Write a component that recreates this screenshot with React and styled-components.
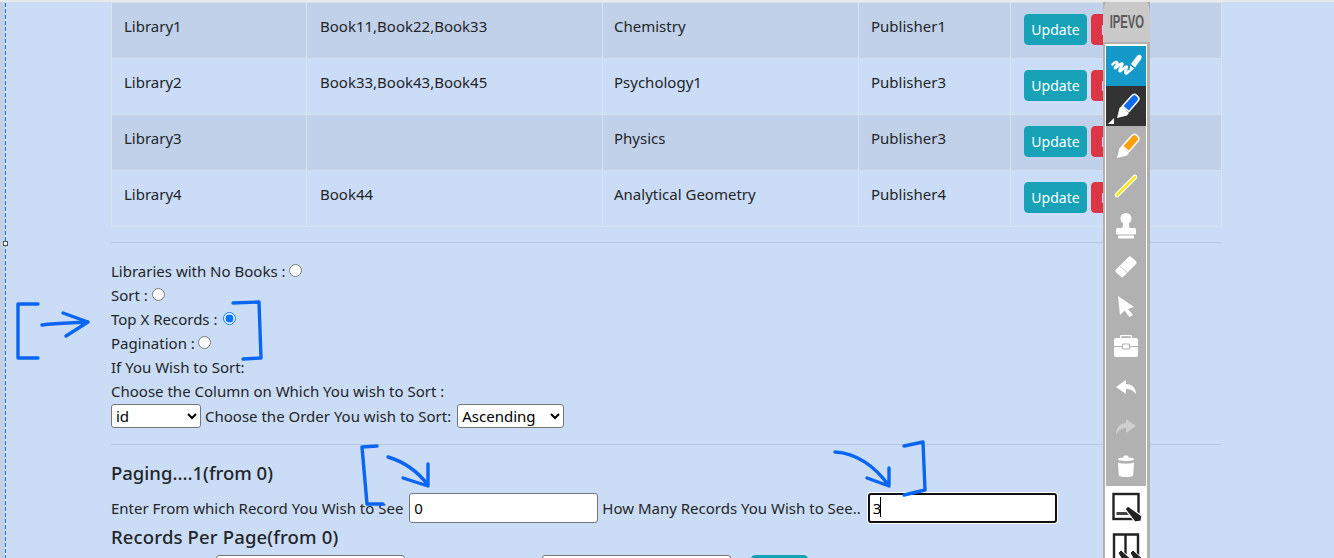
import React from "react";
import styled, { createGlobalStyle } from "styled-components";

const GlobalStyle = createGlobalStyle`
  html, body {
    margin: 0;
    padding: 0;
    height: 558px;
    overflow: hidden;
    background: #cbddf6;
  }
  * { box-sizing: border-box; }
`;

const Page = styled.div`
  position: relative;
  width: 1334px;
  height: 558px;
  overflow: hidden;
  display: flex;
  background: #cbddf6;
  border-top: 2px solid #e9e9e9;
  font-family: "Noto Sans", "Open Sans", sans-serif;
  font-size: 15px;
  line-height: 24px;
  color: #212529;
`;

const Rail = styled.div`
  width: 5px;
  flex: none;
  background: #c3d0e4;
`;

const DashLine = styled.div`
  width: 1px;
  flex: none;
  margin-top: 1px;
  background: repeating-linear-gradient(to bottom, #1f74d8 0 4px, #ffffff 4px 6px);
`;

const Handle = styled.div`
  position: absolute;
  left: 3px;
  top: 239px;
  width: 5px;
  height: 5px;
  background: #fff;
  border: 1px solid #555;
`;

const Container = styled.main`
  width: 1110px;
  flex: none;
  margin-left: 105px;
`;

const Table = styled.table`
  width: 1110px;
  table-layout: fixed;
  border-collapse: collapse;
`;

const Row = styled.tr`
  height: 56px;
  background: ${(p) => (p.$striped ? "#c1d1ea" : "transparent")};
`;

const Cell = styled.td`
  border: 1px solid #d8e1ee;
  padding: 11px 0 0 ${(p) => p.$pad || 13}px;
  vertical-align: top;
  overflow: hidden;
  white-space: nowrap;
  width: ${(p) => p.$w}px;
`;

const Btn = styled.button`
  display: inline-block;
  height: 31px;
  padding: 0 0 0 ${(p) => p.$pl || 0}px;
  border: 1px solid ${(p) => p.$color};
  border-radius: 4px;
  background: ${(p) => p.$color};
  color: #fff;
  font: inherit;
  font-size: 14px;
  line-height: 29px;
  text-align: ${(p) => (p.$pl ? "left" : "center")};
  width: ${(p) => p.$w}px;
  margin-right: 4px;
  vertical-align: top;
`;

const Rule = styled.hr`
  margin: ${(p) => p.$top || 16}px 0 16px;
  height: 1px;
  border: 0;
  background: #b4c6e2;
`;

const Line = styled.div`
  height: 24px;
  display: flex;
  align-items: center;
  white-space: nowrap;
`;

const Radio = styled.input.attrs({ type: "radio" })`
  margin: 0 0 2px ${(p) => p.$gap || 4}px;
  width: 13px;
  height: 13px;
`;

const SelectRow = styled.div`
  display: flex;
  align-items: center;
  gap: 4px;
  height: 25px;
  white-space: nowrap;
`;

const Select = styled.select`
  width: ${(p) => p.$w}px;
  height: 24px;
  margin-left: ${(p) => p.$ml || 0}px;
  background: #fff;
  color: #000;
  border: 1px solid #767676;
  border-radius: 3px;
  font-family: inherit;
  font-size: 15px;
  padding-left: 0;
`;

const Heading = styled.h5`
  margin: 0 0 ${(p) => p.$mb || 8}px;
  height: 24px;
  font-size: 18.5px;
  line-height: 24px;
  font-weight: 500;
  letter-spacing: ${(p) => p.$track || 0}px;
  white-space: nowrap;
`;

const FieldRow = styled.div`
  display: flex;
  align-items: center;
  gap: 4px;
  height: 30px;
  white-space: nowrap;
  margin-bottom: 2px;
`;

const FieldWrap = styled.div`
  position: relative;
  flex: none;
  margin-left: ${(p) => p.$ml || 0}px;
`;

const Field = styled.input`
  display: block;
  width: 189px;
  height: 30px;
  padding: 0 4px;
  background: #fff;
  color: #000;
  border: 1px solid #767676;
  border-radius: 3px;
  font-family: inherit;
  font-size: 15px;
  outline: none;
  ${(p) =>
    p.$focused &&
    `
    border: 2px solid #101010;
    padding: 0 3px;
    box-shadow: 0 0 0 1px #fff;
  `}
`;

const Caret = styled.span`
  position: absolute;
  left: 12px;
  top: 4px;
  width: 1px;
  height: 20px;
  background: #000;
`;

const Spacer = styled.span`
  width: ${(p) => p.$w}px;
  flex: none;
`;

const Toolbar = styled.aside`
  position: absolute;
  left: 1103px;
  top: -12px;
  width: 47px;
  height: 572px;
  display: flex;
  flex-direction: column;
  background: #b1b1b1;
  padding: 0 3px 0 2px;
`;

const ToolHead = styled.div`
  margin: 0 -3px 0 -2px;
  height: 52px;
  flex: none;
  padding-top: 22px;
  border-radius: 24px 24px 0 0 / 24px 24px 0 0;
  background: #c9c9c9;
  color: #5a5a5a;
  font-family: "Liberation Sans", sans-serif;
  font-size: 15px;
  font-weight: 700;
  line-height: 20px;
  text-align: center;
  span {
    display: inline-block;
    transform: scale(0.75, 1.2);
  }
`;

const ToolBody = styled.div`
  flex: 1;
  display: flex;
  flex-direction: column;
  margin-top: 2px;
  background: #b1b1b1;
  border: solid #fff;
  border-width: 2px 1px 0;
`;

const ToolCell = styled.div`
  width: 40px;
  height: 40px;
  flex: none;
  position: relative;
  background: ${(p) => p.$bg || "transparent"};
  svg {
    display: block;
    width: 40px;
    height: 40px;
  }
`;

const Corner = styled.span`
  position: absolute;
  left: 2px;
  bottom: 2px;
  width: 0;
  height: 0;
  border-style: solid;
  border-width: 0 0 6px 6px;
  border-color: transparent transparent #fff transparent;
`;

const WhiteTray = styled.div`
  flex: 1;
  background: #fff;
  display: flex;
  flex-direction: column;
`;

const Overlay = styled.svg`
  position: absolute;
  left: 0;
  top: -2px;
  width: 1334px;
  height: 558px;
  pointer-events: none;
`;

const Ink = styled.path`
  fill: none;
  stroke: #0a66f2;
  stroke-width: 3.4;
  stroke-linecap: round;
  stroke-linejoin: round;
`;

const rows = [
  ["Library1", "Book11,Book22,Book33", "Chemistry", "Publisher1"],
  ["Library2", "Book33,Book43,Book45", "Psychology1", "Publisher3"],
  ["Library3", "", "Physics", "Publisher3"],
  ["Library4", "Book44", "Analytical Geometry", "Publisher4"],
];

const Pen = ({ color }) => (
  <svg viewBox="0 0 40 40">
    <path d="M11 32l2.500-10 2.500-2 7 7-2 2.500z" fill="#fff" />
    <path d="M16.500 20l9.500-10.500a3.200 3.200 0 0 1 4.500-.2l1.300 1.200a3.200 3.200 0 0 1 .2 4.500L23 25.500z" fill={color} stroke="#fff" strokeWidth="1.500" />
  </svg>
);

function App() {
  return (
    <>
      <GlobalStyle />
      <Page>
        <Rail />
        <DashLine />
        <Handle />
        <Container>
          <Table>
            <tbody>
              {rows.map((r, i) => (
                <Row key={r[0]} $striped={i % 2 === 0}>
                  <Cell $w={195} $pad={12}>{r[0]}</Cell>
                  <Cell $w={296}>{r[1]}</Cell>
                  <Cell $w={256} $pad={11}>{r[2]}</Cell>
                  <Cell $w={152} $pad={12}>{r[3]}</Cell>
                  <Cell $w={211}>
                    <Btn $color="#17a2b8" $w={63}>Update</Btn>
                    <Btn $color="#dc3545" $w={58} $pl={9}>Delete</Btn>
                  </Cell>
                </Row>
              ))}
            </tbody>
          </Table>
          <Rule $top={15} />
          <Line>Libraries with No Books :<Radio name="a" $gap={3} /></Line>
          <Line>Sort :<Radio name="a" /></Line>
          <Line>Top X Records :<Radio name="a" $gap={6} defaultChecked /></Line>
          <Line>Pagination :<Radio name="a" $gap={3} /></Line>
          <Line>If You Wish to Sort:</Line>
          <Line>Choose the Column on Which You wish to Sort :</Line>
          <SelectRow>
            <Select $w={90} defaultValue="id"><option>id</option></Select>
            <span>Choose the Order You wish to Sort:</span>
            <Select $w={107} $ml={2} defaultValue="Ascending"><option>Ascending</option></Select>
          </SelectRow>
          <Rule />
          <Heading>Paging....1(from 0)</Heading>
          <FieldRow>
            <span>Enter From which Record You Wish to See</span>
            <FieldWrap $ml={2}><Field defaultValue="0" readOnly /></FieldWrap>
            <span>How Many Records You Wish to See..</span>
            <FieldWrap $ml={3}>
              <Field defaultValue="3" readOnly $focused />
              <Caret />
            </FieldWrap>
          </FieldRow>
          <Heading $mb={6} $track={0.15}>Records Per Page(from 0)</Heading>
          <FieldRow>
            <Spacer $w={101} />
            <Field readOnly />
            <Spacer $w={129} />
            <Field readOnly />
            <Spacer $w={12} />
            <Btn $color="#17a2b8" $w={57} />
          </FieldRow>
        </Container>

        <Overlay viewBox="0 0 1334 558">
          <Ink d="M38 304H18V358H38" />
          <Ink d="M42 325C58 323 72 323 88 322M63 313L88 322L66 336" />
          <Ink d="M233 303L259 302L261 358L243 359" />
          <Ink d="M377 446L362 447L367 504L383 504" />
          <Ink d="M388 457C405 462 418 472 428 485M428 464L428 486L403 478" />
          <Ink d="M835 452C856 453 875 466 889 486M889 468L889 486L867 478" />
          <Ink d="M904 446L923 442L925 490L904 495" />
        </Overlay>

        <Toolbar>
          <ToolHead><span>IPEVO</span></ToolHead>
          <ToolBody>
            <ToolCell $bg="#1499c9">
              <svg viewBox="0 0 40 40">
                <path d="M6.500 18.500c2-2.500 4.500-3 5-1.500s-3 3.500-2.500 5 5-5 7-4.500-3.500 6-2.500 7.500 5.500-5 7-4.500-2.500 5-1 6.500 2.500-1 3-2" fill="none" stroke="#fff" strokeWidth="2.500" strokeLinecap="round" strokeLinejoin="round" />
                <path d="M25 18l6-8c1-1.300 2.800-1.500 3.800-.7s1.300 2.400.3 3.700L29 21.500z" fill="#fff" />
                <path d="M24.200 19.500l4 3-5.200 4.500z" fill="#fff" />
              </svg>
            </ToolCell>
            <ToolCell $bg="#333333">
              <Pen color="#0f6cf0" />
              <Corner />
            </ToolCell>
            <ToolCell><Pen color="#ff9f0a" /></ToolCell>
            <ToolCell>
              <svg viewBox="0 0 40 40">
                <path d="M11 29L29 11" stroke="#fff" strokeWidth="4.600" strokeLinecap="round" />
                <path d="M11 29L29 11" stroke="#ffe600" strokeWidth="2.400" strokeLinecap="round" />
              </svg>
            </ToolCell>
            <ToolCell>
              <svg viewBox="0 0 40 40" fill="#fff">
                <circle cx="20" cy="12.500" r="5.500" />
                <path d="M17.500 15h5l1 7h-7z" />
                <rect x="10" y="22" width="20" height="6.500" rx="1.500" />
                <rect x="12" y="29.500" width="16" height="3" rx="1" />
              </svg>
            </ToolCell>
            <ToolCell>
              <svg viewBox="0 0 40 40" fill="#fff">
                <path d="M10 23.500L22.500 11a2 2 0 0 1 2.800 0l4.700 4.300a2 2 0 0 1 0 2.800L17.500 30.500a2 2 0 0 1-2.800 0L10 26.300a2 2 0 0 1 0-2.800z" />
                <path d="M14 20l7 6.500" stroke="#b1b1b1" strokeWidth="0.800" />
              </svg>
            </ToolCell>
            <ToolCell>
              <svg viewBox="0 0 40 40" fill="#fff">
                <path d="M12 10L28 21L22 23L27 29L23.500 31L18.500 24.500L14 29Z" />
              </svg>
            </ToolCell>
            <ToolCell>
              <svg viewBox="0 0 40 40" fill="#fff">
                <path d="M14 12.500V10a1 1 0 0 1 1-1h10a1 1 0 0 1 1 1v2.500h-1.300v-2.200h-9.400v2.200z" />
                <rect x="8" y="12" width="24" height="19" rx="2" />
                <path d="M8 20.500h8.500M23.500 20.500H32M16.500 18h7v5h-7z" fill="none" stroke="#b1b1b1" strokeWidth="1" />
              </svg>
            </ToolCell>
            <ToolCell>
              <svg viewBox="0 0 40 40" fill="#fff">
                <path d="M10 21L20 14V18C26 18 30 22 30 28C27 24 24 23 20 23V28Z" />
              </svg>
            </ToolCell>
            <ToolCell>
              <svg viewBox="0 0 40 40" fill="#cfcfcf">
                <path d="M30 20L20 13V17C14 17 10 22 10 28C13 24 16 22 20 22V27Z" />
              </svg>
            </ToolCell>
            <ToolCell>
              <svg viewBox="0 0 40 40" fill="#fff">
                <path d="M17.500 10.500c0-.8.700-1 2.500-1s2.500.2 2.500 1v1c3 .2 5.500.8 5.500 1.800s-3.500 1.700-8 1.700-8-.7-8-1.700 2.500-1.600 5.500-1.800z" />
                <path d="M12 16.500c2 .8 5 1.200 8 1.200s6-.4 8-1.200l-.8 12.500c-.1 1.500-3 2-7.200 2s-7.100-.5-7.200-2z" />
              </svg>
            </ToolCell>
            <WhiteTray>
              <ToolCell>
                <svg viewBox="0 0 40 40">
                  <rect x="7.500" y="8" width="25" height="25" fill="none" stroke="#222" strokeWidth="2.400" />
                  <rect x="10.500" y="26" width="15" height="3" fill="#444" />
                  <path d="M19 23l3-3 14 10-1 5-6 1z" fill="#222" stroke="#fff" strokeWidth="1.200" />
                </svg>
              </ToolCell>
              <ToolCell>
                <svg viewBox="0 0 40 40">
                  <path d="M8 40V8.500h24V30M19.500 8.500V28" fill="none" stroke="#222" strokeWidth="2.400" />
                  <path d="M12 27l3-3 9 8 2 8h-6zM24 27l3-3 9 8 2 8h-6z" fill="#222" stroke="#fff" strokeWidth="1" />
                </svg>
              </ToolCell>
            </WhiteTray>
          </ToolBody>
        </Toolbar>
      </Page>
    </>
  );
}

export default App;
